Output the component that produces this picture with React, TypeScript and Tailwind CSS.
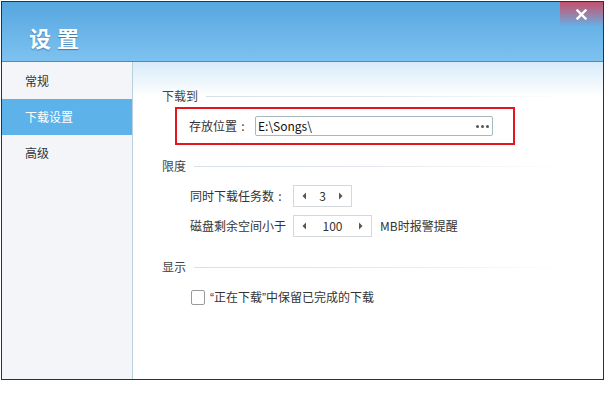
import React from "react";

const font = { fontFamily: '"Noto Sans CJK SC", "Noto Sans", sans-serif' };

function SectionTitle({ title }: { title: string }) {
  return (
    <div className="flex items-center h-[18px]">
      <span className="text-[12px] leading-[18px] text-[#444]">{title}</span>
      <div className="ml-[8px] h-px flex-1 mr-[36px] bg-gradient-to-r from-[#d9e1e7] via-[#e3e9ee] to-transparent" />
    </div>
  );
}

function Colon() {
  return <span className="inline-block w-[12px] text-center">:</span>;
}

function LeftArrow() {
  return (
    <svg width="5" height="8" viewBox="0 0 5 8">
      <path d="M4 0.5 L0.5 4 L4 7.5 Z" fill="#555" />
    </svg>
  );
}
function RightArrow() {
  return (
    <svg width="5" height="8" viewBox="0 0 5 8">
      <path d="M1 0.5 L4.5 4 L1 7.5 Z" fill="#555" />
    </svg>
  );
}

function Spinner({ value, width }: { value: string; width: string }) {
  return (
    <div className={`${width} h-[22px] border border-[#d3d8dc] bg-white flex items-center justify-between px-[8px]`}>
      <LeftArrow />
      <span className="text-[12px] text-[#333] leading-none">{value}</span>
      <RightArrow />
    </div>
  );
}

const quote = { fontFamily: '"Liberation Sans", Arial, sans-serif' };

export default function App() {
  return (
    <div className="w-[607px] h-[394px] bg-white overflow-hidden relative" style={font}>
      <div className="ml-px mt-px w-[603px] h-[379px] border border-[#2f3133] flex flex-col bg-white">
        {/* Title bar */}
        <div className="h-[60px] shrink-0 bg-gradient-to-b from-[#56a6e0] to-[#7dc2f0] border-b border-[#4a8dbd] flex items-start justify-between relative">
          <div
            className="ml-[27px] mt-[21px] text-[22px] font-bold text-white tracking-[6px] leading-[28px]"
            style={{ textShadow: "0 1px 1px rgba(30,80,130,0.6)" }}
          >
            设置
          </div>
          <div className="w-[43px] h-[24px] bg-gradient-to-b from-[#c4506c] via-[#b86a8a]/70 to-transparent flex items-center justify-center">
            <svg width="11" height="11" viewBox="0 0 11 11">
              <path d="M1.5 1.5 L9.5 9.5 M9.5 1.5 L1.5 9.5" stroke="#fff" strokeWidth="2.4" strokeLinecap="square" />
            </svg>
          </div>
        </div>
        {/* Body */}
        <div className="flex flex-1 min-h-0">
          <div className="w-[131px] shrink-0 bg-[#f4f5f9] border-r border-[#b9cfdc] flex flex-col">
            <div className="h-[37px] flex items-center pl-[23px] text-[12px] text-[#333]">常规</div>
            <div className="h-[36px] flex items-center pl-[23px] text-[12px] text-white bg-[#5db2ea]">下载设置</div>
            <div className="h-[36px] flex items-center pl-[23px] text-[12px] text-[#333]">高级</div>
          </div>
          <div className="flex-1 bg-gradient-to-b from-[#d8ebf9] via-white via-[35px] to-white pt-[25px] pl-[29px]">
            <SectionTitle title="下载到" />
            <div className="mt-[2px] ml-[13px] w-[340px] h-[38px] border-2 border-[#e3161f] flex items-center pl-[12px]">
              <span className="text-[12px] text-[#333] w-[66px]">存放位置<Colon /></span>
              <div className="w-[238px] h-[20px] border border-[#a9b7c0] rounded-[2px] bg-white flex items-center justify-between pl-[2px] pr-[3px]">
                <span className="text-[12px] text-[#111] leading-none">E:\Songs\</span>
                <span className="flex gap-[2px] items-center">
                  <span className="w-[3px] h-[3px] rounded-full bg-[#555]" />
                  <span className="w-[3px] h-[3px] rounded-full bg-[#555]" />
                  <span className="w-[3px] h-[3px] rounded-full bg-[#555]" />
                </span>
              </div>
            </div>

            <div className="mt-[12px]">
              <SectionTitle title="限度" />
            </div>
            <div className="mt-[10px] ml-[28px] flex items-center">
              <span className="text-[12px] text-[#333] w-[103px]">同时下载任务数<Colon /></span>
              <Spinner value="3" width="w-[59px]" />
            </div>
            <div className="mt-[8px] ml-[28px] flex items-center">
              <span className="text-[12px] text-[#333] w-[103px]">磁盘剩余空间小于</span>
              <Spinner value="100" width="w-[79px]" />
              <span className="ml-[8px] text-[12px] text-[#333]">MB时报警提醒</span>
            </div>

            <div className="mt-[21px]">
              <SectionTitle title="显示" />
            </div>
            <div className="mt-[12px] ml-[29px] flex items-center">
              <div className="w-[14px] h-[15px] border border-[#9a9a9a] rounded-[2px] bg-white" />
              <span className="ml-[5px] text-[12px] text-[#333]">
                <span style={quote}>“</span>正在下载<span style={quote}>”</span>中保留已完成的下载
              </span>
            </div>
          </div>
        </div>
      </div>
    </div>
  );
}
